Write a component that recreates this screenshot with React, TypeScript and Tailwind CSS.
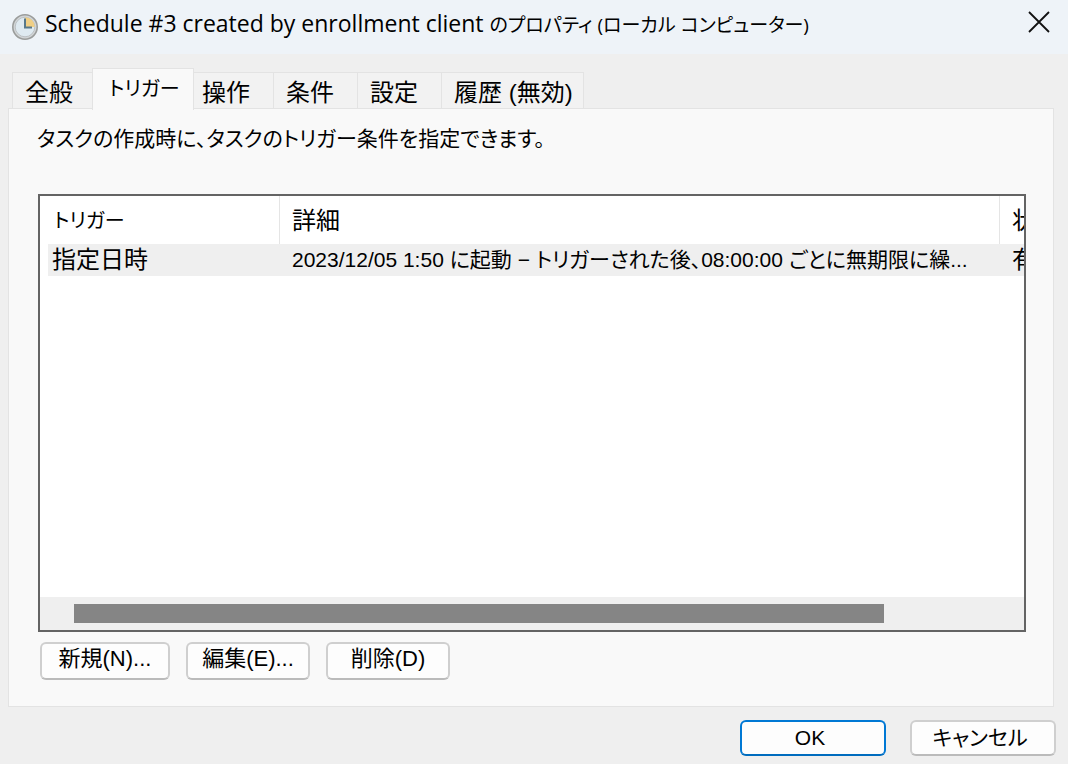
import { useState } from "react";

const tabs = [
  { label: "全般", size: "w-[84px] text-2xl" },
  { label: "トリガー", size: "w-[102px] text-[20px]" },
  { label: "操作", size: "w-[84px] text-2xl" },
  { label: "条件", size: "w-[84px] text-2xl" },
  { label: "設定", size: "w-[84px] text-2xl" },
  { label: "履歴 (無効)", size: "w-[142px] text-2xl" },
];

function ClockIcon() {
  return (
    <svg viewBox="0 0 28 28" className="size-7 shrink-0" aria-hidden="true">
      <circle cx="14" cy="14" r="12.2" fill="#d3d6d8" stroke="#9b9d9c" strokeWidth="1.6" />
      <circle cx="14" cy="14" r="9.8" fill="#dfeaf1" stroke="#bcc1c4" strokeWidth="1" />
      <path d="M14 14V4.2A9.8 9.8 0 0 1 23.8 14Z" fill="#f0cf85" />
      <path d="M14 5.5V14.5H21" fill="none" stroke="#58788a" strokeWidth="2" />
    </svg>
  );
}

export default function App() {
  const [active, setActive] = useState(1);
  const button =
    "flex items-center justify-center rounded-md border-2 border-[#cfcfcf] border-b-[#bbbbbb] bg-[#fdfdfd] leading-7";

  return (
    <div className="flex min-h-screen flex-col bg-[#efefef] font-['Liberation_Sans','Noto_Sans_CJK_JP',sans-serif] text-[21px] leading-8 text-black [font-feature-settings:'palt']">
      <header className="flex h-[54px] items-center bg-[#eef3f8] pr-[17px] pl-[11px]">
        <ClockIcon />
        <h1 className="ml-1.5 min-w-0 flex-1 truncate pb-1.5 font-['Open_Sans','Noto_Sans_CJK_JP',sans-serif] text-[23px]">
          Schedule #3 created by enrollment client{" "}
          <span className="text-[19px]">のプロパティ (ローカル コンピューター)</span>
        </h1>
        <button type="button" aria-label="閉じる" className="mb-2.5 flex size-6 items-center justify-center">
          <svg viewBox="0 0 24 24" className="size-6" fill="none" stroke="#111" strokeWidth="1.8">
            <path d="M2 2 22 22M22 2 2 22" />
          </svg>
        </button>
      </header>

      <main className="flex flex-1 flex-col pt-3.5 pr-3.5 pl-2">
        <div role="tablist" className="flex items-end pl-1">
          {tabs.map((tab, i) => (
            <button
              key={tab.label}
              type="button"
              role="tab"
              aria-selected={i === active}
              onClick={() => setActive(i)}
              className={`${tab.size} ${
                i === active
                  ? "z-10 -mx-1 -mb-0.5 h-[42px] border-x border-t bg-[#f9f9f9] pb-0.5 pl-4"
                  : "h-9 border-t border-r bg-[#f2f2f2] pt-1 pl-3 first:border-l"
              } border-[#e3e3e3] text-left leading-8 whitespace-nowrap`}
            >
              {tab.label}
            </button>
          ))}
        </div>

        <section role="tabpanel" className="flex flex-1 flex-col border border-[#e3e3e3] bg-[#f9f9f9] pt-3.5 pr-[27px] pb-[26px] pl-7">
          <p>タスクの作成時に、タスクのトリガー条件を指定できます。</p>

          <div className="mt-[39px] ml-px flex flex-1 flex-col overflow-hidden border-2 border-[#646464] bg-white">
            <div className="flex-1 overflow-hidden pl-2">
              <table className="w-[1052px] table-fixed border-separate border-spacing-0 text-left whitespace-nowrap">
                <colgroup>
                  <col className="w-[232px]" />
                  <col className="w-[720px]" />
                  <col className="w-[100px]" />
                </colgroup>
                <thead>
                  <tr className="h-12">
                    <th className="border-r border-[#e5e5e5] p-0 pt-0.5 pl-1.5 text-[20px] font-normal">トリガー</th>
                    <th className="border-r border-[#e5e5e5] p-0 pt-0.5 pl-3 text-2xl leading-8 font-normal">詳細</th>
                    <th className="p-0 pt-0.5 pl-3 text-2xl leading-8 font-normal">状態</th>
                  </tr>
                </thead>
                <tbody>
                  <tr className="h-8 bg-[#efefef]">
                    <td className="p-0 pl-1 text-2xl leading-8">指定日時</td>
                    <td className="p-0 pl-3">2023/12/05 1:50 に起動 − トリガーされた後、08:00:00 ごとに無期限に繰...</td>
                    <td className="p-0 pl-3 text-2xl leading-8">有効</td>
                  </tr>
                </tbody>
              </table>
            </div>
            <div className="h-[33px] bg-[#efefef] pt-[7px] pr-[140px] pl-[34px]">
              <div className="h-[19px] bg-[#858585]" />
            </div>
          </div>

          <div className="mt-2.5 flex gap-4 pl-[3px]">
            <button type="button" className={`${button} h-[38px] w-[130px] pb-1 text-[22px]`}>新規(N)...</button>
            <button type="button" className={`${button} h-[38px] w-[124px] pb-1 text-[22px]`}>編集(E)...</button>
            <button type="button" className={`${button} h-[38px] w-[124px] pb-1 text-[22px]`}>削除(D)</button>
          </div>
        </section>
      </main>

      <footer className="flex justify-end gap-6 pt-[13px] pr-3 pb-2">
        <button type="button" className="flex h-9 w-[146px] items-center justify-center rounded-md border-2 border-[#0078d4] border-b-[#006cbe] bg-[#fdfdfd] pr-1.5 leading-7">
          OK
        </button>
        <button type="button" className={`${button} h-9 w-[146px] pr-1.5`}>キャンセル</button>
      </footer>
    </div>
  );
}
